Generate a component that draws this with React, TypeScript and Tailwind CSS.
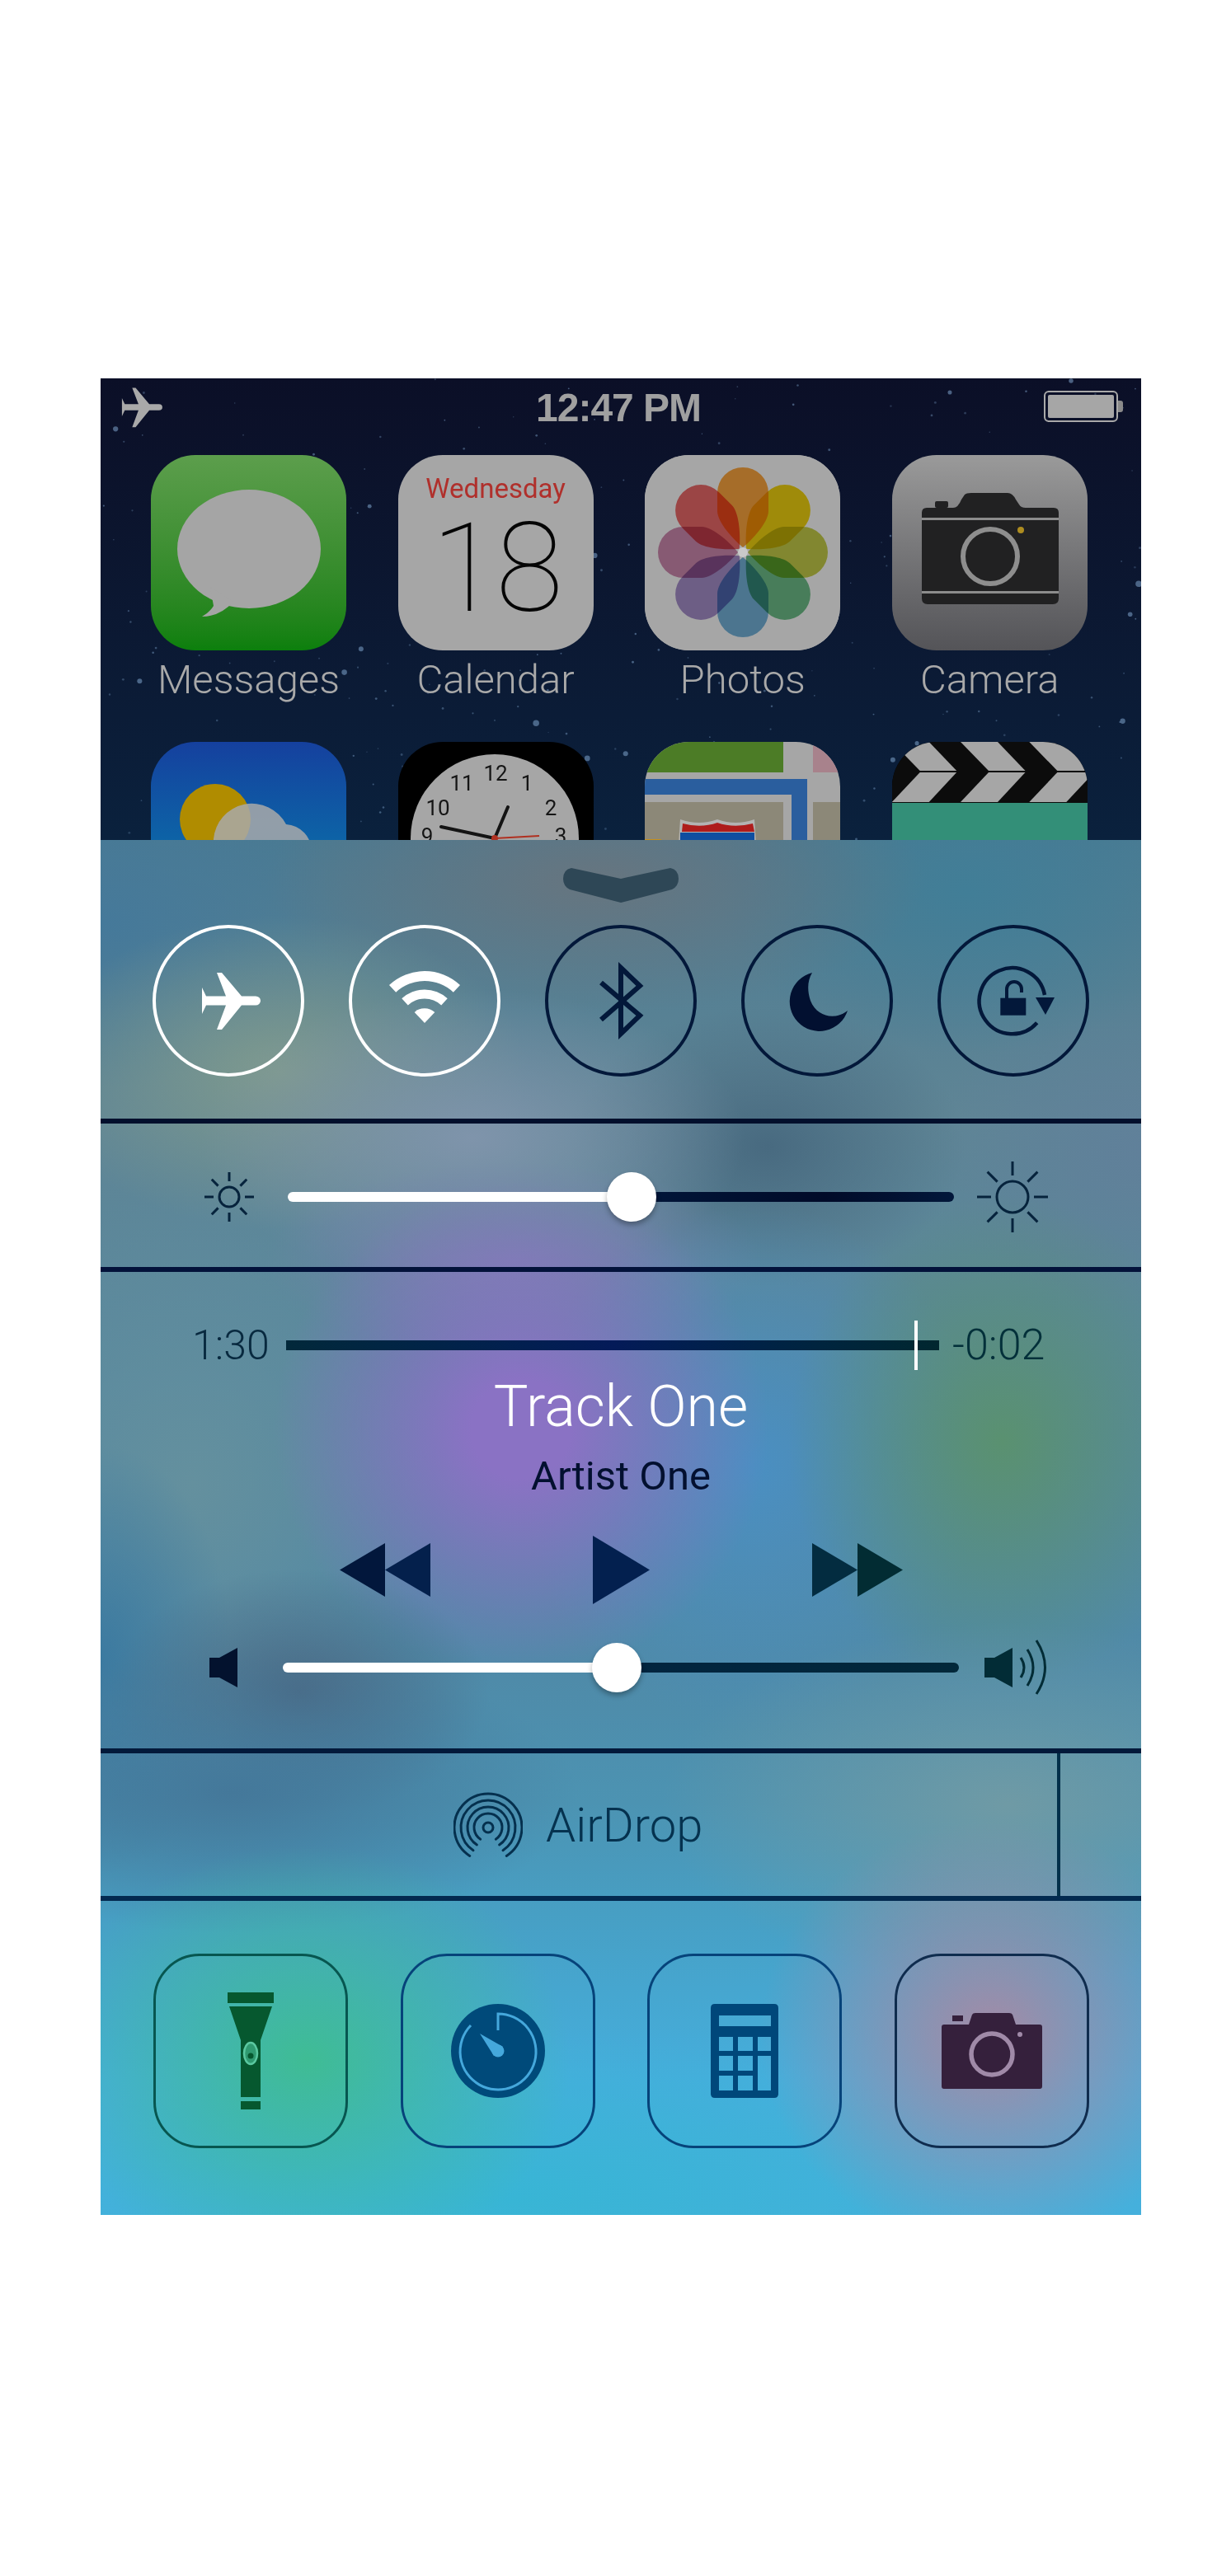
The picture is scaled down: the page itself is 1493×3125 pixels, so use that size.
import React from 'react';

const FONT = "font-['Roboto','Liberation_Sans',sans-serif]";

const apps = ['Messages', 'Calendar', 'Photos', 'Camera'];

// wallpaper specks, same every render
const stars = (() => {
  const out: { x: number; y: number; r: number; o: number }[] = [];
  let seed = 74;
  const next = () => {
    seed = (seed * 16807) % 2147483647;
    return seed / 2147483647;
  };
  for (let i = 0; i < 260; i++) {
    const big = next() > 0.9;
    out.push({ x: next() * 1262, y: next() * 560, r: big ? 2.2 + next() * 1.6 : 0.7 + next() * 0.8, o: big ? 0.55 : 0.22 + next() * 0.3 });
  }
  return out;
})();

const petals = [
  { a: 0, c: '#ffa83e' },
  { a: 45, c: '#f5d60e' },
  { a: 90, c: '#c8d04a' },
  { a: 135, c: '#6fc08a' },
  { a: 180, c: '#74b4dc' },
  { a: 225, c: '#a890cc' },
  { a: 270, c: '#d08ab0' },
  { a: 315, c: '#ee6a6a' },
];

function Squircle({ children, className }: { children: React.ReactNode; className: string }) {
  return <div className={`relative w-[237px] h-[237px] shrink-0 rounded-[54px] overflow-hidden ${className}`}>{children}</div>;
}

function Plane({ size, color }: { size: number; color: string }) {
  return (
    <svg width={size} height={size} viewBox="-42 -42 84 84" fill={color}>
      <path d="M-32 -16 L-27 -5.5 H-3 L-14 -34 H-8 L16 -5.5 H33 A6 5.5 0 0 1 33 5.5 H16 L-8 35 H-14 L-3 5.500 H-27 L-32 16 Z" />
    </svg>
  );
}

function StatusBar() {
  return (
    <div className="relative flex items-start justify-between h-[64px] pl-[19px] pr-[22px] pt-[6px]">
      <Plane size={58} color="#a9a9a9" />
      <span className="absolute left-[528px] top-[9px] text-[48px] leading-[54px] font-['Liberation_Sans',sans-serif] font-bold text-[#a0a0a0] tracking-[-1px]">12:47 PM</span>
      <div className="flex items-center mt-[9px]">
        <div className="w-[90px] h-[38px] rounded-[6px] border-2 border-[#a9a9a9] p-[3px]">
          <div className="w-full h-full rounded-[2px] bg-[#a6a6a6]" />
        </div>
        <div className="w-[6px] h-[14px] rounded-r-[3px] bg-[#8a8a8a]" />
      </div>
    </div>
  );
}

function MessagesIcon() {
  return (
    <Squircle className="bg-gradient-to-b from-[#5c9e4c] to-[#0b7f0c]">
      <svg width="237" height="237" viewBox="0 0 237 237">
        <ellipse cx="119" cy="114" rx="87" ry="72" fill="#a5a5a5" />
        <path d="M72 160 L76 183 Q72 190 62 196 Q84 196 100 178 Z" fill="#a5a5a5" />
      </svg>
    </Squircle>
  );
}

function CalendarIcon() {
  return (
    <Squircle className="bg-[#a6a6a6] flex flex-col items-center">
      <span className={`mt-[22px] text-[33px] leading-[38px] text-[#b0302c] ${FONT}`}>Wednesday</span>
      <span className={`mt-[3px] text-[150px] leading-[150px] font-thin text-[#050505] tracking-[-4px] ${FONT}`}>18</span>
    </Squircle>
  );
}

function PhotosIcon() {
  return (
    <Squircle className="bg-[#a6a6a6]">
      <svg width="237" height="237" viewBox="-119 -118 237 237">
        <rect x="-119" y="-118" width="237" height="237" fill="#a6a6a6" />
        {petals.map((p) => (
          <path
            key={p.a}
            transform={`rotate(${p.a})`}
            className="mix-blend-multiply"
            fill={p.c}
            d="M0 -6 C-10 -14 -31 -36 -31 -50 V-72 A31 31 0 0 1 31 -72 V-50 C31 -36 10 -14 0 -6 Z"
          />
        ))}
        <circle r="6" fill="#c9c9c9" />
      </svg>
    </Squircle>
  );
}

function CameraApp() {
  return (
    <Squircle className="bg-gradient-to-b from-[#9a9a9a] to-[#545458]">
      <svg width="237" height="237" viewBox="0 0 237 237">
        <path d="M36 70 Q36 64 42 64 H74 Q80 64 84 54 L88 48 Q90 46 96 46 H140 Q146 46 150 54 L154 60 Q156 64 162 64 H196 Q202 64 202 70 V174 Q202 181 195 181 H43 Q36 181 36 174 Z" fill="#212122" />
        <rect x="52" y="56" width="16" height="8" rx="2" fill="#212122" />
        <rect x="36" y="76" width="166" height="3" fill="#8c8c8c" />
        <rect x="36" y="165" width="166" height="3" fill="#8c8c8c" />
        <circle cx="119" cy="123" r="33" fill="none" stroke="#8e8e8e" strokeWidth="6" />
        <circle cx="156" cy="91" r="4" fill="#ad8c20" />
      </svg>
    </Squircle>
  );
}

function WeatherIcon() {
  return (
    <Squircle className="bg-gradient-to-b from-[#15409e] to-[#0a83ad]">
      <svg width="237" height="237" viewBox="0 0 237 237">
        <circle cx="78" cy="94" r="43" fill="#b08c00" />
        <g fill="#a9a9a9" fillOpacity="0.85">
          <path d="M76 118 A46.700 46.700 0 0 1 164 100 A33 33 0 0 1 195 133 V237 H76 Z" />
        </g>
      </svg>
    </Squircle>
  );
}

function ClockIcon() {
  const nums = [
    { t: '12', x: 118, y: 47 },
    { t: '11', x: 77, y: 59 },
    { t: '1', x: 156, y: 59 },
    { t: '10', x: 48, y: 89 },
    { t: '2', x: 185, y: 89 },
    { t: '9', x: 35, y: 123 },
    { t: '3', x: 197, y: 123 },
  ];
  return (
    <Squircle className="bg-black">
      <svg width="237" height="237" viewBox="0 0 237 237">
        <circle cx="117" cy="117" r="102" fill="#a6a6a6" />
        {nums.map((n) => (
          <text key={n.t} x={n.x} y={n.y} textAnchor="middle" fontSize="26" fontFamily="Roboto, sans-serif" fill="#151515">
            {n.t}
          </text>
        ))}
        <line x1="117" y1="117" x2="133" y2="79" stroke="#141414" strokeWidth="4" strokeLinecap="round" />
        <line x1="117" y1="117" x2="52" y2="103" stroke="#141414" strokeWidth="4" strokeLinecap="round" />
        <line x1="117" y1="117" x2="171" y2="114" stroke="#b03020" strokeWidth="2" />
        <circle cx="117" cy="117" r="4" fill="#b03020" />
      </svg>
    </Squircle>
  );
}

function MapsIcon() {
  return (
    <Squircle className="bg-[#a6a6a6]">
      <svg width="237" height="237" viewBox="0 0 237 237">
        <rect width="168" height="37" fill="#4c7c26" />
        <rect x="204" width="33" height="37" fill="#a8828c" />
        <path d="M0 45 H197 V237 H178 V64 H0 Z" fill="#2a5e9e" />
        <rect y="73" width="168" height="164" fill="#8c8878" />
        <rect x="204" y="73" width="33" height="164" fill="#8c8878" />
        <rect y="118" width="20" height="8" fill="#c8901a" />
        <path d="M43 94 Q66 102 88 94 Q110 102 133 94 L136 140 H40 Z" fill="#b3b3b3" />
        <path d="M46 99 Q68 105 88 98 Q108 105 131 99 L133 109 H45 Z" fill="#ae1c1c" />
        <rect x="43" y="110" width="90" height="30" fill="#0f4ea0" />
        <circle cx="66" cy="127" r="8" fill="#b8b8b8" />
        <circle cx="88" cy="127" r="8" fill="#b8b8b8" />
        <circle cx="110" cy="127" r="8" fill="#b8b8b8" />
      </svg>
    </Squircle>
  );
}

function VideosIcon() {
  return (
    <Squircle className="bg-black">
      <svg width="237" height="237" viewBox="0 0 237 237">
        <rect width="237" height="74" fill="#0c0c0c" />
        {[-83.3, 0, 83.3].map((dx) => (
          <g key={dx} transform={`translate(${dx} 0)`} fill="#a6a6a6">
            <polygon points="83,0 128,0 161.500,35 117,35" />
            <polygon points="117,37 161.500,37 128,73 83,73" />
          </g>
        ))}
        <rect y="74" width="237" height="163" fill="#338f78" />
      </svg>
    </Squircle>
  );
}

function HomeScreen() {
  return (
    <div className="relative h-[560px] overflow-hidden bg-gradient-to-b from-[#0b0f27] to-[#0a213d]">
      <svg className="absolute inset-0" width="1262" height="560" viewBox="0 0 1262 560">
        {stars.map((s, i) => (
          <circle key={i} cx={s.x} cy={s.y} r={s.r} fill="#7fa4cc" opacity={s.o} />
        ))}
      </svg>
      <div className="relative">
        <StatusBar />
        <div className="flex gap-[62.6px] pl-[61px] pt-[29px]">
          {[MessagesIcon, CalendarIcon, PhotosIcon, CameraApp].map((Icon, i) => (
            <div key={apps[i]} className="w-[237px] shrink-0 flex flex-col items-center">
              <Icon />
              <span className={`mt-[8px] text-[49px] leading-[56px] font-light text-[#a9a9a9] ${FONT}`}>{apps[i]}</span>
            </div>
          ))}
        </div>
        <div className="flex gap-[62.6px] pl-[61px] pt-[47px]">
          <WeatherIcon />
          <ClockIcon />
          <MapsIcon />
          <VideosIcon />
        </div>
      </div>
    </div>
  );
}

function Circle({ on, children }: { on?: boolean; children: React.ReactNode }) {
  return (
    <div className={`w-[184px] h-[184px] rounded-full border-[4px] flex items-center justify-center ${on ? 'border-white' : 'border-[#03183a]'}`}>
      {children}
    </div>
  );
}

function Toggles() {
  return (
    <div className="flex justify-between pl-[63px] pr-[63px] pt-[27px]">
      <Circle on>
        <Plane size={84} color="#ffffff" />
      </Circle>
      <Circle on>
        <svg width="90" height="74" viewBox="-45 -64 90 74" fill="#ffffff">
          <path d="M-43 -46 A63 63 0 0 1 43 -46 L34.800 -37.300 A51 51 0 0 0 -34.800 -37.300 Z" />
          <path d="M-27.700 -29.700 A40.600 40.600 0 0 1 27.700 -29.700 L20.200 -21.600 A29.600 29.600 0 0 0 -20.200 -21.600 Z" />
          <path d="M-12.300 -13 A18 18 0 0 1 12.300 -13 L0 0 Z" />
        </svg>
      </Circle>
      <Circle>
        <svg width="60" height="94" viewBox="-30 -47 60 94" fill="none" stroke="#03183a" strokeWidth="6">
          <path d="M-24 -22 L23 18 L0 40 V-40 L23 -18 L-24 23" />
        </svg>
      </Circle>
      <Circle>
        <svg width="78" height="78" viewBox="-39 -39 78 78" fill="#021030">
          <path d="M-6 -34 A36 36 0 1 0 37 12 C22 24 0 20 -8 0 C-12 -12 -12 -24 -6 -34 Z" />
        </svg>
      </Circle>
      <Circle>
        <svg width="184" height="184" viewBox="-4 2 184 184" className="shrink-0" fill="none">
          <path d="M116.700 120.700 A40 40 0 1 1 126 87" stroke="#03183a" strokeWidth="4.500" />
          <polygon points="115,90 138,90 127,111" fill="#03183a" />
          <rect x="72.300" y="90.700" width="31" height="21" fill="#03183a" />
          <path d="M80 91 V80 A9 9 0 0 1 98 80 V84" stroke="#03183a" strokeWidth="4" />
        </svg>
      </Circle>
    </div>
  );
}

function Sun({ r, inner, outer, w }: { r: number; inner: number; outer: number; w: number }) {
  const half = outer + 2;
  return (
    <svg width={half * 2} height={half * 2} viewBox={`${-half} ${-half} ${half * 2} ${half * 2}`} fill="none" stroke="#06233c" strokeWidth={w}>
      <circle r={r} />
      {[0, 45, 90, 135, 180, 225, 270, 315].map((a) => (
        <line key={a} transform={`rotate(${a})`} x1="0" y1={-inner} x2="0" y2={-outer} />
      ))}
    </svg>
  );
}

function Slider({ width, height, pct, thumb, dark }: { width: number; height: number; pct: number; thumb: number; dark: string }) {
  return (
    <div className="relative flex items-center" style={{ width }}>
      <div className="w-full flex rounded-full overflow-hidden" style={{ height }}>
        <div className="bg-white" style={{ width: pct }} />
        <div className="flex-1" style={{ background: dark }} />
      </div>
      <div
        className="absolute rounded-full bg-white shadow-[0_4px_6px_rgba(0,0,0,0.3)]"
        style={{ left: pct - thumb / 2, width: thumb, height: thumb }}
      />
    </div>
  );
}

function Brightness() {
  return (
    <div className="h-[174px] relative flex items-center pt-[4px]">
      <div className="w-[227px] shrink-0 pl-[124px] flex">
        <Sun r={12} inner={19} outer={30} w={3} />
      </div>
      <Slider width={808} height={12} pct={417} thumb={60} dark="linear-gradient(90deg,#01163a,#010a28 60%,#02173a)" />
      <div className="ml-[26px] flex">
        <Sun r={19} inner={26} outer={43} w={3} />
      </div>
    </div>
  );
}

function Triangles({ dir, colors }: { dir: 'l' | 'r'; colors: string[] }) {
  return (
    <svg width="110" height="65" viewBox="0 0 110 65">
      {dir === 'l' ? (
        <>
          <polygon points="55,0 55,65 0,32.500" fill={colors[0]} />
          <polygon points="110,0 110,65 55,32.500" fill={colors[1]} />
        </>
      ) : (
        <>
          <polygon points="0,0 55,32.500 0,65" fill={colors[0]} />
          <polygon points="55,0 110,32.500 55,65" fill={colors[1]} />
        </>
      )}
    </svg>
  );
}

function Media() {
  return (
    <div className="h-[578px] flex flex-col items-center">
      {/* scrubber */}
      <div className="w-full flex items-center h-[60px] mt-[59px] pl-[111px]">
        <span className={`w-[114px] text-[50px] leading-[60px] font-light text-[#08293f] ${FONT}`}>1:30</span>
        <div className="relative w-[792px] h-[12px] bg-gradient-to-r from-[#02283a] via-[#041a58] to-[#01272f]">
          <div className="absolute left-[762px] top-[-24px] w-[4px] h-[60px] bg-white" />
        </div>
        <span className={`ml-[16px] text-[52px] leading-[60px] font-light text-[#03303a] ${FONT}`}>-0:02</span>
      </div>
      <div className={`mt-[5px] text-[70px] leading-[78px] font-light text-white ${FONT}`}>Track One</div>
      <div className={`mt-[18px] text-[49px] leading-[56px] text-[#031030] ${FONT}`}>Artist One</div>
      {/* transport */}
      <div className="w-full flex items-center h-[84px] mt-[43px] pl-[290px]">
        <Triangles dir="l" colors={['#02173c', '#04204c']} />
        <svg width="69" height="83" viewBox="0 0 69 83" className="ml-[197px]">
          <polygon points="0,0 69,41.500 0,83" fill="#03204f" />
        </svg>
        <div className="ml-[197px]">
          <Triangles dir="r" colors={['#032c40', '#022c33']} />
        </div>
      </div>
      {/* volume */}
      <div className="w-full flex items-center h-[67px] mt-[43px] pl-[132px]">
        <svg width="34" height="48" viewBox="0 0 34 48">
          <polygon points="0,12 12,12 34,0 34,48 12,36 0,36" fill="#03122e" />
        </svg>
        <div className="ml-[55px]">
          <Slider width={820} height={12} pct={405} thumb={60} dark="linear-gradient(90deg,#02243f,#02283a)" />
        </div>
        <svg width="82" height="67" viewBox="0 0 82 67" className="ml-[31px]" fill="none" stroke="#022c36" strokeWidth="3">
          <polygon points="0,22 12,22 34,10 34,58 12,46 0,46" fill="#022c36" stroke="none" />
          <path d="M44 22 Q52 34 44 46" />
          <path d="M52 12 Q66 34 52 56" />
          <path d="M63 1 Q84 34 63 66" />
        </svg>
      </div>
    </div>
  );
}

function AirDropRow() {
  return (
    <div className="h-[173px] flex">
      <div className="w-[1160px] flex items-center pl-[428px]">
        <svg width="84" height="80" viewBox="0 0 84 80" fill="none" stroke="#05304e" strokeWidth="3" strokeLinecap="round">
          <path d="M19.700 77.400 A41 41 0 1 1 64.300 77.400" />
          <path d="M24 70.700 A33 33 0 1 1 60 70.700" />
          <path d="M28.400 64 A25 25 0 1 1 55.600 64" />
          <path d="M32.700 57.200 A17 17 0 1 1 51.300 57.200" />
          <circle cx="42" cy="43" r="6" />
        </svg>
        <span className={`ml-[28px] text-[58px] leading-[64px] font-light text-[#05324f] ${FONT}`}>AirDrop</span>
      </div>
      <div className="w-[4px] bg-[#02304a]" />
    </div>
  );
}

function ToolButton({ border, children }: { border: string; children: React.ReactNode }) {
  return (
    <div className={`w-[236px] h-[236px] shrink-0 rounded-[56px] border-[3px] flex items-center justify-center ${border}`}>{children}</div>
  );
}

function Tools() {
  return (
    <div className="h-[381px] flex gap-[63.5px] pl-[64px] pt-[64px]">
      <ToolButton border="border-[#075650]">
        <svg width="56" height="142" viewBox="0 0 56 142" fill="#06582f">
          <rect width="56" height="13" />
          <path d="M2 17 H54 L40 58 V127 H16 V58 Z" />
          <rect x="16" y="132" width="24" height="10" />
          <ellipse cx="28" cy="74" rx="8" ry="13" fill="#2f9a70" stroke="#5ac8a0" strokeWidth="2.500" />
          <circle cx="28" cy="77" r="3.500" fill="#06582f" />
        </svg>
      </ToolButton>
      <ToolButton border="border-[#06437a]">
        <svg width="114" height="114" viewBox="0 0 114 114">
          <circle cx="57" cy="57" r="57" fill="#004a7a" />
          <path d="M57 32 V12 A46 46 0 1 1 24 26" fill="none" stroke="#45a8dc" strokeWidth="3" />
          <polygon points="35,36 63,52 52,63" fill="#45a8dc" />
          <circle cx="57" cy="57" r="7.500" fill="#45a8dc" />
        </svg>
      </ToolButton>
      <ToolButton border="border-[#06437a]">
        <svg width="82" height="114" viewBox="0 0 82 114">
          <path
            fill="#00477a"
            fillRule="evenodd"
            d="M5 0 H77 Q82 0 82 5 V109 Q82 114 77 114 H5 Q0 114 0 109 V5 Q0 0 5 0 Z M10 14 V27 H73 V14 Z M10 40 V57 H27 V40 Z M33 40 V57 H51 V40 Z M57 40 V57 H73 V40 Z M10 63 V81 H27 V63 Z M33 63 V81 H51 V63 Z M57 63 V105 H73 V63 Z M10 87 V105 H27 V87 Z M33 87 V105 H51 V87 Z"
          />
        </svg>
      </ToolButton>
      <ToolButton border="border-[#0f2c4e]">
        <svg width="122" height="92" viewBox="0 0 122 92">
          <path d="M3 14 H33 L37 2 Q38 0 41 0 H82 Q85 0 86 2 L90 14 H119 Q122 14 122 17 V89 Q122 92 119 92 H3 Q0 92 0 89 V17 Q0 14 3 14 Z" fill="#35203c" />
          <rect x="13" y="3" width="13" height="7" fill="#35203c" />
          <circle cx="61" cy="50" r="25" fill="none" stroke="#a08aa8" strokeWidth="5.500" />
          <circle cx="95" cy="26" r="3" fill="#a08aa8" />
        </svg>
      </ToolButton>
    </div>
  );
}

function ControlCenter() {
  return (
    <div className="flex flex-col h-[1668px] bg-[radial-gradient(ellipse_320px_260px_at_250px_1480px,#3fbc94,transparent),radial-gradient(ellipse_280px_260px_at_1080px_1450px,#a58aa5,transparent),radial-gradient(ellipse_600px_200px_at_500px_1650px,#38b5d5,transparent),radial-gradient(ellipse_420px_220px_at_1100px_1170px,#6f9aa5,transparent),radial-gradient(ellipse_420px_170px_at_160px_1156px,#44789a,transparent),radial-gradient(ellipse_230px_150px_at_241px_1034px,#4a6a85,transparent),radial-gradient(ellipse_160px_260px_at_0px_994px,#3c7aa0,transparent),radial-gradient(ellipse_260px_300px_at_1094px_730px,#5a9170,transparent),radial-gradient(ellipse_300px_300px_at_510px_715px,#8a72c4_20%,transparent),radial-gradient(ellipse_280px_320px_at_790px_760px,#4a8fc2,transparent),radial-gradient(ellipse_300px_360px_at_110px_780px,#64909e,transparent),radial-gradient(ellipse_300px_120px_at_500px_510px,#7a80b0,transparent),radial-gradient(ellipse_330px_180px_at_451px_361px,#7f94ab,transparent),radial-gradient(ellipse_300px_190px_at_217px_282px,#7f9a8e,transparent),radial-gradient(ellipse_240px_170px_at_808px_372px,#486a80,transparent),radial-gradient(ellipse_400px_160px_at_600px_50px,#67757f,transparent),radial-gradient(ellipse_260px_200px_at_1262px_380px,#60809a,transparent),radial-gradient(ellipse_300px_200px_at_1050px_60px,#417e97,transparent),radial-gradient(ellipse_300px_200px_at_0px_100px,#45799a,transparent),linear-gradient(to_bottom,#4a7a92_0%,#5f8595_20%,#4f8aa8_60%,#4c93b2_70%,#479fc4_78%,#45aedc_90%,#45b0dc_100%)]">
      <div className="h-[338px] shrink-0">
        <div className="flex justify-center pt-[34px]">
          <svg width="140" height="42" viewBox="0 0 140 42" className="ml-[-1px]">
            <path d="M10 0 L70 13 L130 0 Q140 2 140 13 Q140 22 132 26 L70 42 L8 26 Q0 22 0 13 Q0 2 10 0 Z" fill="#2e4756" />
          </svg>
        </div>
        <Toggles />
      </div>
      <div className="h-[6px] shrink-0 bg-[#020f2c]" />
      <Brightness />
      <div className="h-[6px] shrink-0 bg-[#03123a]" />
      <Media />
      <div className="h-[6px] shrink-0 bg-[#02193a]" />
      <AirDropRow />
      <div className="h-[6px] shrink-0 bg-[#032a50]" />
      <Tools />
    </div>
  );
}

export default function App() {
  return (
    <div className="min-h-[3125px] bg-white pt-[459px] pl-[122px]">
      <div className="w-[1262px]">
        <HomeScreen />
        <ControlCenter />
      </div>
    </div>
  );
}
